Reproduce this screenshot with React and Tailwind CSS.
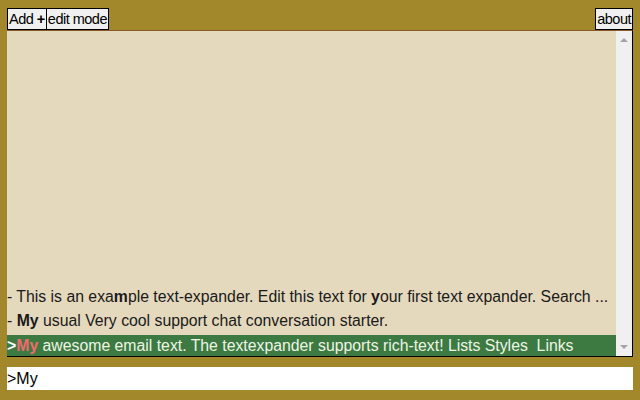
import React, { useState } from "react";

const items = [
  {
    id: 1,
    parts: [
      ["- This is an exa", ""],
      ["m", "b"],
      ["ple text-expander. Edit this text for ", ""],
      ["y", "b"],
      ["our first text expander. Search ...", ""],
    ],
  },
  {
    id: 2,
    parts: [
      ["- ", ""],
      ["My", "b"],
      [" usual Very cool support chat conversation starter.", ""],
    ],
  },
];

export default function App() {
  const [query, setQuery] = useState(">My");

  return (
    <div
      className="h-[400px] w-[640px] bg-[#a3882b] px-[7px] pt-[8px] flex flex-col"
      style={{ fontFamily: '"Liberation Sans", Arial, sans-serif' }}
    >
      <div className="flex items-stretch h-[22px]">
        <button className="bg-[#f0f0f0] border border-black px-px text-[14.5px] tracking-[-0.5px] leading-none text-black">
          Add <b>+</b>
        </button>
        <button className="bg-[#f0f0f0] border border-l-0 border-black px-px text-[14.5px] tracking-[-0.5px] leading-none text-black">
          edit mode
        </button>
        <div className="flex-1" />
        <button className="bg-[#f0f0f0] border border-black px-px text-[14.5px] tracking-[-0.5px] leading-none text-black">
          about
        </button>
      </div>

      <div className="h-[327px] flex bg-[#e4d8bd] border-t border-t-[#8a5a2a] border-r border-b border-r-black border-b-black">
        <div className="flex-1 min-w-0 flex flex-col justify-end">
          {items.map((item) => (
            <div
              key={item.id}
              className="h-[24px] flex items-center whitespace-nowrap overflow-hidden text-[15.8px] text-[#1a1a1a]"
            >
              <span className="truncate">
                {item.parts.map(([t, s], i) =>
                  s === "b" ? (
                    <b key={i}>{t}</b>
                  ) : (
                    <span key={i}>{t}</span>
                  )
                )}
              </span>
            </div>
          ))}
          <div className="h-[21px] mt-[2px] flex items-center whitespace-nowrap overflow-hidden bg-[#3d7a41] text-[15.8px] text-[#eef5e6]">
            <b className="text-white">&gt;</b>
            <b className="text-[#ef6a6f]">My</b>
            <span>&nbsp;awesome email text. The textexpander supports rich-text! Lists Styles&nbsp; Links</span>
          </div>
        </div>
        <div className="w-[16px] bg-[#f0f0f0] flex flex-col justify-between items-center py-[6px]">
          <svg width="8" height="5" viewBox="0 0 8 5">
            <path d="M0 5 L4 1 L8 5 Z" fill="#a3a3a3" />
          </svg>
          <svg width="8" height="5" viewBox="0 0 8 5">
            <path d="M0 0 L4 4 L8 0 Z" fill="#a3a3a3" />
          </svg>
        </div>
      </div>

      <input
        value={query}
        onChange={(e) => setQuery(e.target.value)}
        className="mt-[10px] h-[23px] bg-white outline-none border-0 px-0 text-[16px] text-black"
        style={{ fontFamily: '"Liberation Sans", Arial, sans-serif' }}
      />
    </div>
  );
}
